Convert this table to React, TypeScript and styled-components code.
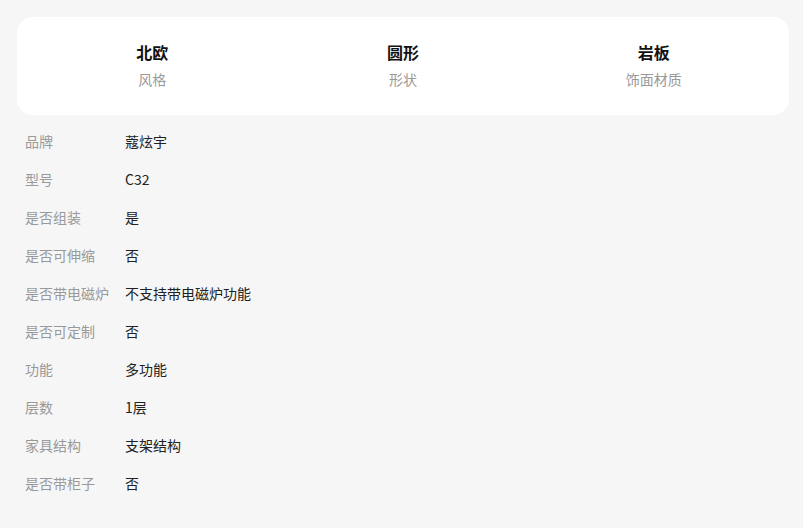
import React from "react";
import styled, { createGlobalStyle } from "styled-components";

const Global = createGlobalStyle`
  html, body { margin: 0; padding: 0; background: #f6f6f6; }
  body { font-family: "Noto Sans CJK SC", "Noto Sans", sans-serif; }
`;

const Page = styled.div`
  padding: 17px 14px 17px 17px;
  box-sizing: border-box;
  width: 803px;
`;

const Card = styled.div`
  background: #fff;
  border-radius: 16px;
  padding: 24px 10px 26px;
  display: grid;
  grid-template-columns: repeat(3, 1fr);
`;

const Feature = styled.div`
  display: flex;
  flex-direction: column;
  align-items: center;
  gap: 6px;
`;

const FeatureTitle = styled.div`
  font-size: 16px;
  font-weight: 700;
  line-height: 22px;
  color: #111;
`;

const FeatureSub = styled.div`
  font-size: 14px;
  line-height: 20px;
  color: #999;
`;

const List = styled.div`
  margin-top: 7px;
  padding-left: 8px;
  display: flex;
  flex-direction: column;
`;

const Row = styled.div`
  display: flex;
  align-items: center;
  height: 38px;
  font-size: 14px;
`;

const Label = styled.div`
  width: 100px;
  flex-shrink: 0;
  color: #999;
`;

const Value = styled.div`
  color: #222;
`;

const features = [
  { title: "北欧", sub: "风格" },
  { title: "圆形", sub: "形状" },
  { title: "岩板", sub: "饰面材质" },
];

const rows: [string, string][] = [
  ["品牌", "蔻炫宇"],
  ["型号", "C32"],
  ["是否组装", "是"],
  ["是否可伸缩", "否"],
  ["是否带电磁炉", "不支持带电磁炉功能"],
  ["是否可定制", "否"],
  ["功能", "多功能"],
  ["层数", "1层"],
  ["家具结构", "支架结构"],
  ["是否带柜子", "否"],
];

export default function App() {
  return (
    <Page>
      <Global />
      <Card>
        {features.map((f) => (
          <Feature key={f.title}>
            <FeatureTitle>{f.title}</FeatureTitle>
            <FeatureSub>{f.sub}</FeatureSub>
          </Feature>
        ))}
      </Card>
      <List>
        {rows.map(([l, v]) => (
          <Row key={l}>
            <Label>{l}</Label>
            <Value>{v}</Value>
          </Row>
        ))}
      </List>
    </Page>
  );
}
